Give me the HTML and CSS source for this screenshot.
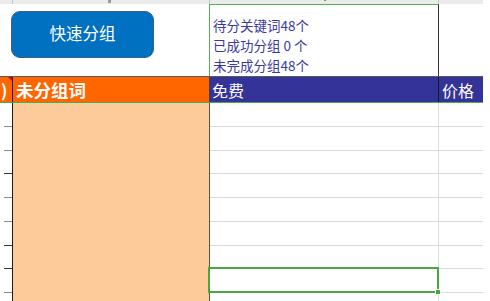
FILE: index.html
```html
<!DOCTYPE html>
<html lang="zh">
<head>
<meta charset="utf-8">
<link rel="stylesheet" href="styles.css">
</head>
<body>
<div class="sheet">
  <div class="row strip">
    <div class="c0"></div>
    <div class="c1"></div>
    <div class="c2"></div>
    <div class="c3"></div>
  </div>
  <div class="row top">
    <div class="btn-cell"><button class="btn">快速分组</button></div>
    <div class="info">
      <p>待分关键词48个</p>
      <p>已成功分组 0 个</p>
      <p>未完成分组48个</p>
    </div>
    <div class="c3"></div>
  </div>
  <div class="row head">
    <div class="c0 orange prev">)<span class="flag"></span></div>
    <div class="c1 orange title">未分组词</div>
    <div class="c2 blue">免费</div>
    <div class="c3 blue">价格</div>
  </div>
  <div class="row data"><div class="c0"></div><div class="c1"></div><div class="c2"></div><div class="c3"></div></div>
  <div class="row data"><div class="c0"></div><div class="c1"></div><div class="c2"></div><div class="c3"></div></div>
  <div class="row data"><div class="c0 dark"></div><div class="c1"></div><div class="c2"></div><div class="c3"></div></div>
  <div class="row data"><div class="c0"></div><div class="c1"></div><div class="c2"></div><div class="c3"></div></div>
  <div class="row data"><div class="c0"></div><div class="c1"></div><div class="c2"></div><div class="c3"></div></div>
  <div class="row data"><div class="c0 dark"></div><div class="c1"></div><div class="c2"></div><div class="c3"></div></div>
  <div class="row data"><div class="c0 dark"></div><div class="c1"></div><div class="c2"></div><div class="c3"></div></div>
  <div class="row data"><div class="c0"></div><div class="c1"></div><div class="c2 sel"><span class="handle"></span></div><div class="c3"></div></div>
  <div class="row data"><div class="c0"></div><div class="c1"></div><div class="c2"></div><div class="c3"></div></div>
</div>
</body>
</html>
```

FILE: styles.css
```css
* { box-sizing: border-box; margin: 0; padding: 0; }
html, body { margin: 0; background: #fff; overflow: hidden; }
body { font-family: "Noto Sans CJK SC", "Noto Sans", sans-serif; }

.sheet { width: 483px; height: 301px; overflow: hidden; }
.row { display: flex; }

.c0 { width: 13px; flex: none; }
.c1 { width: 197px; flex: none; }
.c2 { width: 229px; flex: none; }
.c3 { width: 44px; flex: none; }

/* top grey strip (column header remnant) */
.strip { height: 4px; background: #ebebeb; }
.strip .c0 { border-right: 1px solid #c4c4c4; }
.strip .c1 {
  border-right: 1px solid #c4c4c4;
  background: linear-gradient(#9a9a9a, #9a9a9a) no-repeat 95px 0 / 3px 3px;
}
.strip .c2 {
  border-right: 1px solid #c4c4c4;
  background: linear-gradient(#55b055, #55b055) no-repeat 114px 0 / 2px 1px;
}

/* button + info row */
.top { height: 72px; }
.btn-cell { width: 209px; flex: none; }
.btn {
  display: block;
  margin: 7px 0 0 11px;
  width: 143px;
  height: 47px;
  background: #0070c0;
  border: 1.5px solid #3b5f88;
  border-radius: 9px;
  color: #fff;
  font-family: "Noto Sans CJK SC", sans-serif;
  font-size: 16.5px;
  line-height: 1;
  padding-bottom: 3px;
}
.info {
  width: 230px;
  flex: none;
  border-top: 1px solid #55b055;
  border-left: 1px solid #55b055;
  border-right: 1px solid #333;
  padding: 10px 0 0 3px;
  color: #3a3a9e;
  font-size: 13.5px;
  line-height: 20px;
  white-space: nowrap;
}

/* header row */
.head {
  height: 27px;
  border-top: 1px solid #5a5a5a;
  border-bottom: 1px solid #4caa4c;
}
.head > div {
  color: #fff;
  display: flex;
  align-items: center;
  font-size: 16px;
  line-height: 1;
  white-space: nowrap;
}
.orange { background: #ff6600; }
.blue { background: #333399; color: #f0f0ff; }
.head .prev { border-right: 1px solid #222; padding-left: 1px; font-weight: 700; font-size: 17px; position: relative; }
.flag {
  position: absolute;
  top: 0;
  right: 0;
  width: 0;
  height: 0;
  border-top: 4px solid #e00000;
  border-left: 4px solid transparent;
}
.head .title { border-right: 1px solid #444; padding-left: 3px; font-weight: 700; font-size: 17.5px; }
.head .c2 { border-right: 1px solid #1a1a1a; padding-left: 2px; }
.head .c3 { padding-left: 3px; }

/* data rows */
.data { height: 23.75px; flex: none; }
.data .c0 {
  border-right: 1px solid #1e1e1e;
  background: linear-gradient(#8a8a8a, #8a8a8a) no-repeat right bottom / 8px 1px;
}
.data .c0.dark { background: linear-gradient(#333, #333) no-repeat right bottom / 8px 1px; }
.data .c1 { background: #fdcb9a; border-right: 1px solid #555550; }
.data .c2 { border-bottom: 1px solid #dadada; border-right: 1px solid #dedede; }
.data .c3 { border-bottom: 1px solid #dadada; }

.sel { position: relative; }
.sel::after {
  content: "";
  position: absolute;
  top: -2px;
  left: -2px;
  right: -1px;
  bottom: -1px;
  border: 2px solid #45a845;
}
.handle {
  position: absolute;
  right: -3px;
  bottom: -3px;
  width: 6px;
  height: 6px;
  background: #45a845;
  border: 1px solid #fff;
  z-index: 1;
}
```
